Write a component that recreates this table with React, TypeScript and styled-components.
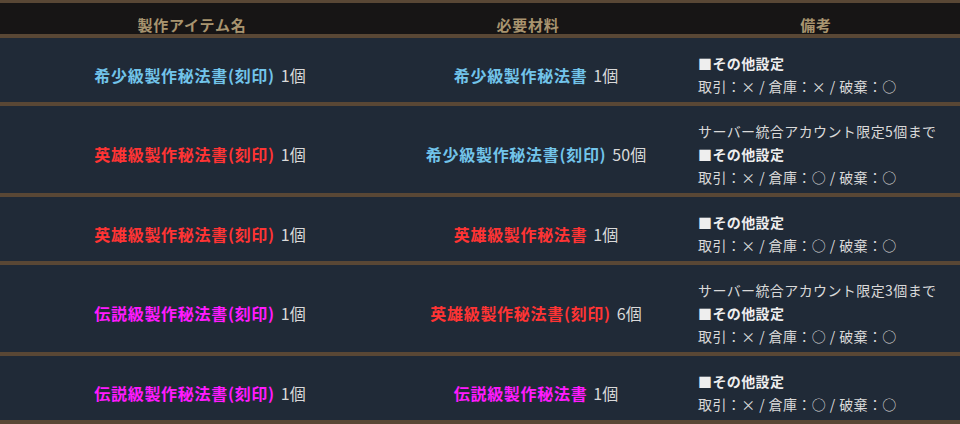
import styled, { createGlobalStyle } from 'styled-components';

const GlobalStyle = createGlobalStyle`
  body {
    margin: 0;
    background: #202a37;
    font-family: 'Noto Sans CJK JP', 'Noto Sans', sans-serif;
  }
`;

const COLOR = {
  border: '#594735',
  headBg: '#171515',
  rowBg: '#202a37',
  headText: '#a8946f',
  text: '#d9d9d9',
  rare: '#72c4ea',
  hero: '#ff3434',
  legend: '#ff1aff',
};

type Grade = 'rare' | 'hero' | 'legend';

const Table = styled.div`
  width: 960px;
  border-top: 3px solid ${COLOR.border};
`;

const HeadRow = styled.div`
  display: grid;
  grid-template-columns: 384px 288px 288px;
  height: 35px;
  box-sizing: border-box;
  background: ${COLOR.headBg};
  border-bottom: 4px solid ${COLOR.border};
`;

const HeadCell = styled.div`
  padding-top: 12px;
  line-height: 19px;
  text-align: center;
  font-size: 15px;
  font-weight: 700;
  letter-spacing: 0.8px;
  color: ${COLOR.headText};
`;

const Row = styled.div`
  display: grid;
  grid-template-columns: 384px 288px 288px;
  background: ${COLOR.rowBg};
  border-bottom: 4px solid ${COLOR.border};
`;

const Cell = styled.div`
  display: flex;
  align-items: center;
  justify-content: center;
  padding: 14px 0 4px 16px;
  line-height: 23px;
  font-size: 16px;
  color: ${COLOR.text};
  white-space: nowrap;
`;

const NoteCell = styled.div`
  padding: 14px 0 4px 26px;
  line-height: 23px;
  font-size: 14px;
  letter-spacing: 0.4px;
  color: ${COLOR.text};
  white-space: nowrap;
`;

const Item = styled.span<{ grade: Grade }>`
  font-weight: 700;
  letter-spacing: 0.7px;
  color: ${(p) => COLOR[p.grade]};
`;

const Qty = styled.span`
  margin-left: 6px;
`;

const NoteTitle = styled.div`
  font-weight: 700;
  color: #eeeeee;
`;

interface IRow {
  item: string;
  grade: Grade;
  mat: string;
  matGrade: Grade;
  matQty: number;
  limit?: number;
  storage: string;
}

const rows: IRow[] = [
  { item: '希少級製作秘法書(刻印)', grade: 'rare', mat: '希少級製作秘法書', matGrade: 'rare', matQty: 1, storage: '×' },
  { item: '英雄級製作秘法書(刻印)', grade: 'hero', mat: '希少級製作秘法書(刻印)', matGrade: 'rare', matQty: 50, limit: 5, storage: '○' },
  { item: '英雄級製作秘法書(刻印)', grade: 'hero', mat: '英雄級製作秘法書', matGrade: 'hero', matQty: 1, storage: '○' },
  { item: '伝説級製作秘法書(刻印)', grade: 'legend', mat: '英雄級製作秘法書(刻印)', matGrade: 'hero', matQty: 6, limit: 3, storage: '○' },
  { item: '伝説級製作秘法書(刻印)', grade: 'legend', mat: '伝説級製作秘法書', matGrade: 'legend', matQty: 1, storage: '○' },
];

function App() {
  return (
    <>
      <GlobalStyle />
      <Table>
        <HeadRow>
          <HeadCell>製作アイテム名</HeadCell>
          <HeadCell>必要材料</HeadCell>
          <HeadCell>備考</HeadCell>
        </HeadRow>
        {rows.map((r, i) => (
          <Row key={i}>
            <Cell>
              <Item grade={r.grade}>{r.item}</Item>
              <Qty>1個</Qty>
            </Cell>
            <Cell>
              <Item grade={r.matGrade}>{r.mat}</Item>
              <Qty>{r.matQty}個</Qty>
            </Cell>
            <NoteCell>
              {r.limit && <div>サーバー統合アカウント限定{r.limit}個まで</div>}
              <NoteTitle>■その他設定</NoteTitle>
              <div>取引：× / 倉庫：{r.storage} / 破棄：○</div>
            </NoteCell>
          </Row>
        ))}
      </Table>
    </>
  );
}

export default App;
